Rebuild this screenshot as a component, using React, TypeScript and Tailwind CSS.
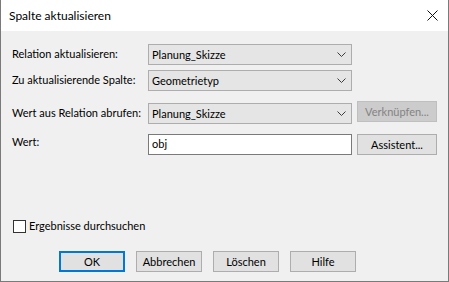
import React from "react";

const font = { fontFamily: 'Lato, "Noto Sans", sans-serif' };

function Chevron() {
  return (
    <svg width="9" height="5" viewBox="0 0 9 5" className="shrink-0">
      <path d="M0.5 0.5 L4.5 4.5 L8.5 0.5" fill="none" stroke="#3c3c3c" strokeWidth="1" />
    </svg>
  );
}

function Combo({ value }: { value: string }) {
  return (
    <div className="w-[204px] h-[21px] shrink-0 bg-[#e5e5e5] border border-[#adadad] flex items-center pl-[3px] pr-[5px] justify-between">
      <span className="text-[#000] leading-none">{value}</span>
      <Chevron />
    </div>
  );
}

function Button({
  label,
  width = 66,
  primary,
  disabled,
}: {
  label: string;
  width?: number;
  primary?: boolean;
  disabled?: boolean;
}) {
  return (
    <div
      style={{ width }}
      className={
        "h-[21px] shrink-0 flex items-center justify-center leading-none whitespace-nowrap " +
        (primary
          ? "border-2 border-[#0078d7] bg-[#e1e1e1] text-black"
          : disabled
          ? "border border-[#bfbfbf] bg-[#cccccc] text-[#838383]"
          : "border border-[#adadad] bg-[#e1e1e1] text-black")
      }
    >
      {label}
    </div>
  );
}

export default function App() {
  return (
    <div
      style={font}
      className="w-[449px] h-[282px] flex flex-col border-x border-b border-[#7a7a7a] text-[11px] text-black bg-[#f0f0f0] whitespace-nowrap"
    >
      {/* Title bar */}
      <div className="h-[31px] bg-white flex items-center justify-between pl-[8px] pr-[10px] shrink-0">
        <span className="text-[12px]">Spalte aktualisieren</span>
        <svg width="11" height="11" viewBox="0 0 11 11">
          <path d="M0.5 0.5 L10.5 10.5 M10.5 0.5 L0.5 10.5" stroke="#111" strokeWidth="1" />
        </svg>
      </div>

      {/* Body */}
      <div className="flex-1 flex flex-col pl-[11px] pt-[13px]">
        <div className="flex items-center h-[21px]">
          <span className="w-[136px] shrink-0">Relation aktualisieren:</span>
          <Combo value="Planung_Skizze" />
        </div>
        <div className="flex items-center h-[21px] mt-[5px]">
          <span className="w-[136px] shrink-0">Zu aktualisierende Spalte:</span>
          <Combo value="Geometrietyp" />
        </div>
        <div className="flex items-start h-[21px] mt-[12px]">
          <span className="w-[136px] shrink-0 h-[21px] flex items-center">Wert aus Relation abrufen:</span>
          <Combo value="Planung_Skizze" />
          <div className="ml-[5px] -mt-[2px]">
            <Button label="Verknüpfen..." width={80} disabled />
          </div>
        </div>
        <div className="flex items-center h-[21px] mt-[10px]">
          <span className="w-[136px] shrink-0 -mt-[4px]">Wert:</span>
          <div className="w-[204px] h-[21px] shrink-0 bg-white border border-[#7a7a7a] flex items-center pl-[3px]">
            obj
          </div>
          <div className="ml-[5px]">
            <Button label="Assistent..." width={80} />
          </div>
        </div>

        <div className="flex items-center mt-[63px] ml-[1px]">
          <div className="w-[13px] h-[13px] border border-[#333] bg-white" />
          <span className="ml-[3px]">Ergebnisse durchsuchen</span>
        </div>

        <div className="flex mt-[16px] ml-[47px] gap-[11px]">
          <Button label="OK" primary />
          <Button label="Abbrechen" />
          <Button label="Löschen" />
          <Button label="Hilfe" />
        </div>
      </div>
    </div>
  );
}
